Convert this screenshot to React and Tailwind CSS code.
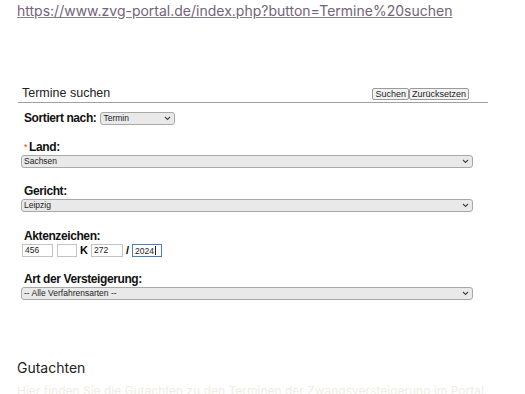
const sans = { fontFamily: '"Liberation Sans", Arial, sans-serif' };

function Chevron() {
  return (
    <svg width="7" height="5" viewBox="0 0 7 5" className="absolute right-[4px] top-[4px]">
      <path d="M1 1 L3.5 3.5 L6 1" fill="none" stroke="#444" strokeWidth="1.1" />
    </svg>
  );
}

function Select({ value, className }) {
  return (
    <div className={`relative h-[13px] ${className}`}>
      <div className="h-full rounded-[3px] border border-[#a8a8a8] bg-[#e9e9e9] pl-[2px] text-[8.5px] leading-[11px] text-[#222]">
        {value}
      </div>
      <Chevron />
    </div>
  );
}

function Label({ children, req }) {
  return (
    <div className="pl-[3px] text-[12px] font-bold leading-[15px] tracking-[-0.4px] text-[#111]">
      {req && <span className="mr-[2px] align-top text-[9px] font-normal text-[#d33]">*</span>}
      {children}
    </div>
  );
}

function Box({ value, w, focus }) {
  return (
    <div
      className={`h-[13px] border bg-white pl-[2px] text-[8.5px] leading-[11px] text-[#222] ${w} ${
        focus ? 'border-[#4a7fc4]' : 'border-[#c4c4c4]'
      }`}
    >
      {value}
      {focus && <span className="ml-[1px] inline-block h-[9px] w-px translate-y-[1px] bg-[#222]" />}
    </div>
  );
}

export default function App() {
  return (
    <div className="h-[394px] w-[525px] overflow-hidden bg-white">
      <div
        className="pl-[17px] pt-[2px] text-[14px] leading-[18px] text-[#74627a] underline decoration-[#8a7a8d]"
        style={{ fontFamily: 'Inter, sans-serif' }}
      >
        https://www.zvg-portal.de/index.php?button=Termine%20suchen
      </div>

      <form className="ml-[18px] mt-[66px] w-[470px]" style={sans}>
        <div className="flex h-[17px] items-end justify-between border-b border-[#a0a0a0] pb-[2px]">
          <span className="pl-[4px] text-[12.5px] leading-[14px] text-[#222]">Termine suchen</span>
          <div className="mr-[19px] flex text-[9px] leading-[10px] text-[#222]">
            <button type="button" className="h-[12px] rounded-[2px] border border-[#9a9a9a] bg-[#f2f2f2] px-[2px]">
              Suchen
            </button>
            <button type="button" className="h-[12px] rounded-[2px] border border-[#9a9a9a] bg-[#f2f2f2] px-[2px]">
              Zurücksetzen
            </button>
          </div>
        </div>

        <div className="pl-[3px]">
          <div className="mt-[8px] flex items-center gap-[4px]">
            <Label>Sortiert nach:</Label>
            <Select value="Termin" className="w-[75px]" />
          </div>

          <div className="mt-[14px]">
            <Label req>Land:</Label>
            <Select value="Sachsen" className="w-[452px]" />
          </div>

          <div className="mt-[16px]">
            <Label>Gericht:</Label>
            <Select value="Leipzig" className="w-[452px]" />
          </div>

          <div className="mt-[17px]">
            <Label>Aktenzeichen:</Label>
            <div className="flex items-center pl-[1px]">
              <Box value="456" w="w-[31px]" />
              <Box value="" w="ml-[4px] w-[20px]" />
              <span className="ml-[3px] mr-[3px] text-[11px] font-bold leading-[13px]">K</span>
              <Box value="272" w="w-[32px]" />
              <span className="ml-[3px] mr-[3px] text-[11px] font-bold leading-[13px]">/</span>
              <Box value="2024" w="w-[30px]" focus />
            </div>
          </div>

          <div className="mt-[15px]">
            <Label>Art der Versteigerung:</Label>
            <Select value="-- Alle Verfahrensarten --" className="w-[452px]" />
          </div>
        </div>
      </form>

      <div
        className="ml-[17px] mt-[59px] text-[14px] leading-[18px] text-[#222]"
        style={{ fontFamily: 'Inter, sans-serif' }}
      >
        Gutachten
      </div>
      <div
        className="ml-[17px] mt-[7px] text-[12px] leading-[14px] text-[#efeee4]"
        style={{ fontFamily: 'Inter, sans-serif' }}
      >
        Hier finden Sie die Gutachten zu den Terminen der Zwangsversteigerung im Portal.
      </div>
    </div>
  );
}
